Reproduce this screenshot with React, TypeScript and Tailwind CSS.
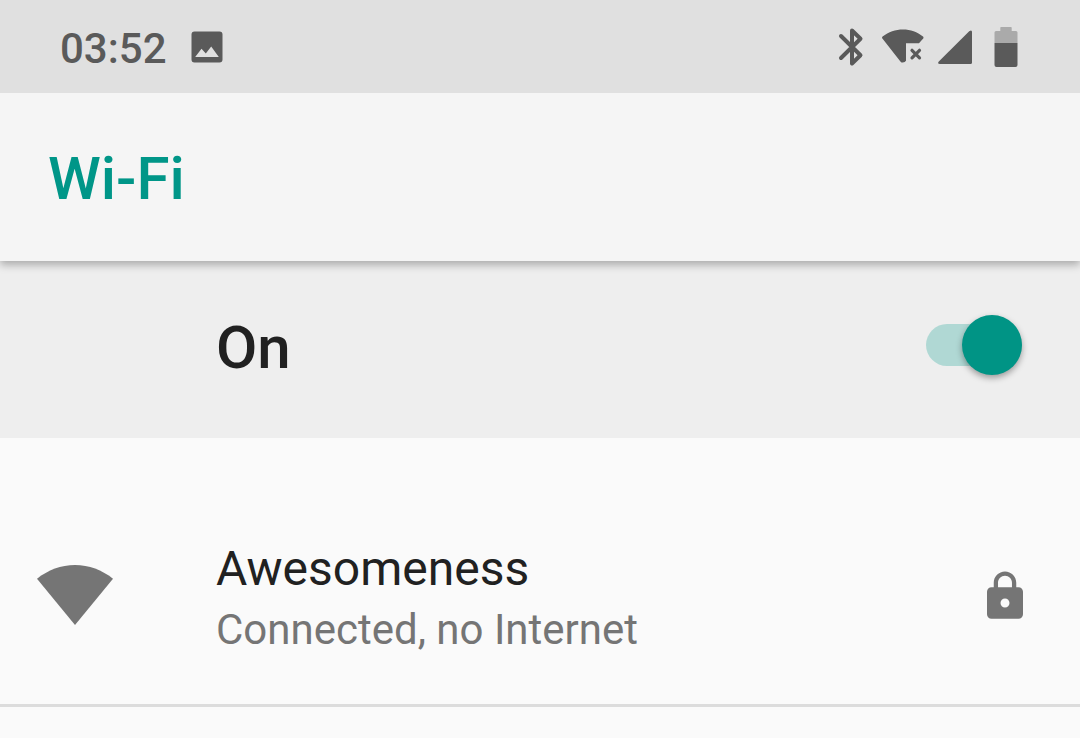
import React, { useState } from 'react';

const StatusBar: React.FC = () => (
  <header className="relative z-10 flex h-[93px] items-center justify-between bg-[#e0e0e0] pl-15 pr-[62px] text-[#5a5a5a]">
    <div className="flex items-center gap-6">
      <time className="pt-1 text-[42px] leading-12 font-medium">03:52</time>
      <svg viewBox="0 0 32 32" className="h-8 w-8" fill="currentColor" aria-hidden="true">
        <path
          fillRule="evenodd"
          d="M3.500.5h25q3 0 3 3v25q0 3-3 3h-25q-3 0-3-3v-25q0-3 3-3zM4.200 26h23.600L20.200 15.500l-5.400 7-4.300-4.700z"
        />
      </svg>
    </div>
    <div className="flex items-center gap-3.5">
      <svg viewBox="0 0 26 40" className="mr-1 h-10 w-[26px]" fill="none" stroke="currentColor" aria-hidden="true">
        <path
          d="M3 9l19.500 19.200L14 36.500v-33l8.500 8.300L3 31"
          strokeWidth="4"
          strokeLinecap="round"
          strokeLinejoin="round"
        />
      </svg>
      <svg viewBox="0 0 42 36" className="h-9 w-[42px]" fill="currentColor" aria-hidden="true">
        <path d="M.6 7.600C6.500 3 13.500.6 21 .6S35.300 3 41 7.600q.9.900.2 1.900L37 14.300H24v17.500q-1 1.800-3.200 1.800-1.500 0-2.400-1.200L.4 9.600q-.8-1 .2-2z" />
        <path d="m30 21.300 7.500 7.500m0-7.500L30 28.800" stroke="currentColor" strokeWidth="3.200" strokeLinecap="round" />
      </svg>
      <svg viewBox="0 0 34 36" className="mr-2 h-9 w-[34px]" fill="currentColor" aria-hidden="true">
        <path d="M31.200 2.200Q34 .4 34 3v30.500q0 1.500-1.500 1.500H2Q-1 35 .8 32.500z" />
      </svg>
      <svg viewBox="0 0 24 40" className="h-10 w-6" fill="currentColor" aria-hidden="true">
        <path opacity=".4" d="M7 0h10q.7 0 .7.800V4h4.300q1.500 0 1.500 1.500V16H.5V5.500Q.5 4 2 4h4.300V.8Q6.300 0 7 0z" />
        <path d="M.5 16h23v22q0 2-2 2h-19q-2 0-2-2z" />
      </svg>
    </div>
  </header>
);

const App: React.FC = () => {
  const [enabled, setEnabled] = useState(true);

  return (
    <div className="min-h-screen bg-[#fafafa] font-[Roboto,sans-serif] text-[#212121]">
      <StatusBar />
      <div className="relative flex h-42 items-center bg-[#f5f5f5] px-12 pt-1 shadow-[0_4px_8px_rgba(0,0,0,0.28)]">
        <h1 className="text-[60px] leading-18 font-medium text-[#009688]">Wi-Fi</h1>
      </div>
      <main>
        <label className="flex h-[177px] cursor-pointer items-center justify-between bg-[#eeeeee] pr-[58px] pb-1 pl-54">
          <span className="text-[60px] leading-18 font-medium">On</span>
          <span className="relative mb-1.5 flex h-15 w-24 items-center">
            <input
              type="checkbox"
              role="switch"
              checked={enabled}
              onChange={(e) => setEnabled(e.target.checked)}
              className="peer h-[42px] w-full cursor-pointer appearance-none rounded-full bg-[#bdbdbd] checked:bg-[#b0d8d4]"
            />
            <span className="pointer-events-none absolute top-0 left-0 size-15 rounded-full bg-[#fafafa] shadow-[0_3px_6px_rgba(0,0,0,0.35)] transition-transform peer-checked:translate-x-9 peer-checked:bg-[#009485]" />
          </span>
        </label>
        <ul className="pt-16">
          <li className="border-b-3 border-[#dcdcdc]">
            <button className="flex w-full cursor-pointer items-center pt-9 pr-[57px] pb-11 pl-9 text-left">
              <svg viewBox="0 0 78 60" className="mb-2 h-15 w-[78px]" fill="#757575" aria-hidden="true">
                <path d="M1 13.700C12 5 25 0 39 0s27 5 38 13.700L39 60z" />
              </svg>
              <span className="ml-[102px] flex flex-1 flex-col">
                <span className="text-[48px] leading-[62px]">Awesomeness</span>
                <span className="text-[42px] leading-15 text-[#757575]">Connected, no Internet</span>
              </span>
              <svg viewBox="4 1 16 21" className="mb-2 h-12 w-9" fill="#757575" aria-hidden="true">
                <path d="M18 8h-1V6c0-2.760-2.240-5-5-5S7 3.240 7 6v2H6c-1.100 0-2 .9-2 2v10c0 1.100.9 2 2 2h12c1.100 0 2-.9 2-2V10c0-1.100-.9-2-2-2zm-6 9c-1.100 0-2-.9-2-2s.9-2 2-2 2 .9 2 2-.9 2-2 2zm3.100-9H8.900V6c0-1.710 1.390-3.100 3.100-3.100s3.100 1.390 3.100 3.100v2z" />
              </svg>
            </button>
          </li>
        </ul>
      </main>
    </div>
  );
};

export default App;
